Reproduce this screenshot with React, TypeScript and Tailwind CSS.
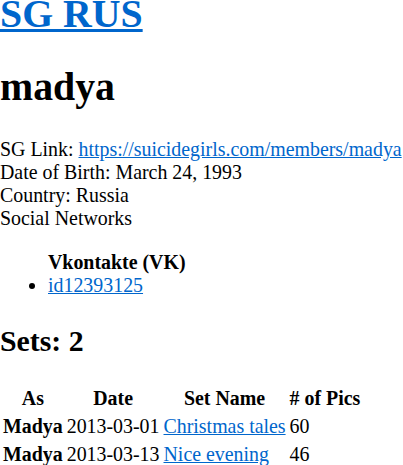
export default function App() {
  const sets = [
    { as: 'Madya', date: '2013-03-01', name: 'Christmas tales', pics: 60 },
    { as: 'Madya', date: '2013-03-13', name: 'Nice evening', pics: 46 },
  ]

  return (
    <div className="font-['Liberation_Serif',serif] text-[19.9px] leading-[23px] text-black bg-white min-h-[465px]">
      <h1 className="mt-[-9px] mb-[27px] text-[39.8px] leading-[46px] font-bold">
        <a href="#" className="text-[#0066cc] underline">SG RUS</a>
      </h1>
      <h1 className="mb-[28px] text-[39.8px] leading-[46px] font-bold">madya</h1>

      <div className="whitespace-nowrap">
        SG Link:{' '}
        <a href="#" className="text-[#0066cc] underline">
          https://suicidegirls.com/members/madya
        </a>
      </div>
      <div>Date of Birth: March 24, 1993</div>
      <div>Country: Russia</div>
      <div>Social Networks</div>

      <ul className="mt-[21px] mb-[20px] pl-[48px] list-disc">
        <li className="list-none font-bold">Vkontakte (VK)</li>
        <li>
          <a href="#" className="text-[#0066cc] underline">id12393125</a>
        </li>
      </ul>

      <h2 className="mt-[27px] mb-[25px] text-[29.8px] leading-[34px] font-bold">Sets: 2</h2>

      <table className="border-separate border-spacing-[2px]">
        <thead>
          <tr>
            <th className="px-[1px] py-[1.5px] text-center font-bold">As</th>
            <th className="px-[1px] py-[1.5px] text-center font-bold">Date</th>
            <th className="px-[1px] py-[1.5px] text-center font-bold">Set Name</th>
            <th className="px-[1px] py-[1.5px] text-center font-bold"># of Pics</th>
          </tr>
        </thead>
        <tbody>
          {sets.map((s) => (
            <tr key={s.date}>
              <td className="px-[1px] py-[1.5px] font-bold">{s.as}</td>
              <td className="px-[1px] py-[1.5px]">{s.date}</td>
              <td className="px-[1px] py-[1.5px]">
                <a href="#" className="text-[#0066cc] underline">{s.name}</a>
              </td>
              <td className="px-[1px] py-[1.5px]">{s.pics}</td>
            </tr>
          ))}
        </tbody>
      </table>
    </div>
  )
}
